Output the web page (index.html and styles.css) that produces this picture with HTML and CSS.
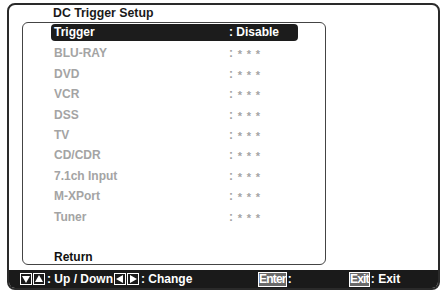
FILE: index.html
```html
<!DOCTYPE html>
<html>
<head>
<meta charset="utf-8">
<link rel="stylesheet" href="styles.css">
</head>
<body>
<div class="screen">
  <div class="title">DC Trigger Setup</div>
  <div class="panel">
    <div class="row active"><span class="label">Trigger</span><span class="value">: Disable</span></div>
    <div class="row dim"><span class="label">BLU-RAY</span><span class="value">: <i>*</i><i>*</i><i>*</i></span></div>
    <div class="row dim"><span class="label">DVD</span><span class="value">: <i>*</i><i>*</i><i>*</i></span></div>
    <div class="row dim"><span class="label">VCR</span><span class="value">: <i>*</i><i>*</i><i>*</i></span></div>
    <div class="row dim"><span class="label">DSS</span><span class="value">: <i>*</i><i>*</i><i>*</i></span></div>
    <div class="row dim"><span class="label">TV</span><span class="value">: <i>*</i><i>*</i><i>*</i></span></div>
    <div class="row dim"><span class="label">CD/CDR</span><span class="value">: <i>*</i><i>*</i><i>*</i></span></div>
    <div class="row dim"><span class="label">7.1ch Input</span><span class="value">: <i>*</i><i>*</i><i>*</i></span></div>
    <div class="row dim"><span class="label">M-XPort</span><span class="value">: <i>*</i><i>*</i><i>*</i></span></div>
    <div class="row dim"><span class="label">Tuner</span><span class="value">: <i>*</i><i>*</i><i>*</i></span></div>
    <div class="row spacer"></div>
    <div class="row"><span class="label">Return</span></div>
  </div>
  <div class="footer">
    <div class="group">
      <span class="key"><svg width="10" height="10" viewBox="0 0 10 10"><path d="M1 2 H9 L5 9 Z" fill="#fff"/></svg></span><span class="key"><svg width="10" height="10" viewBox="0 0 10 10"><path d="M1 8 H9 L5 1 Z" fill="#fff"/></svg></span><span class="txt">: Up / Down</span><span class="key"><svg width="10" height="10" viewBox="0 0 10 10"><path d="M8 1 V9 L1 5 Z" fill="#fff"/></svg></span><span class="key"><svg width="10" height="10" viewBox="0 0 10 10"><path d="M2 1 V9 L9 5 Z" fill="#fff"/></svg></span><span class="txt">: Change</span>
    </div>
    <div class="group"><span class="word">Enter</span><span class="txt">:</span></div>
    <div class="group"><span class="word">Exit</span><span class="txt">: Exit</span></div>
  </div>
</div>
</body>
</html>
```

FILE: styles.css
```css
html, body {
  margin: 0;
  padding: 0;
  background: #fff;
}
body {
  font-family: "Liberation Sans", Arial, sans-serif;
  font-weight: bold;
  color: #111;
}
.screen {
  margin: 3px 0 0 7px;
  width: 429px;
  height: 283px;
  border: 2px solid #2a2a2a;
  border-radius: 8px;
  display: flex;
  flex-direction: column;
  overflow: hidden;
}
.title {
  height: 17px;
  line-height: 17px;
  font-size: 12.3px;
  padding-left: 44px;
  color: #1a1a1a;
}
.panel {
  margin-left: 13px;
  width: 302px;
  height: 241px;
  border: 1px solid #444;
  border-radius: 6px;
  box-sizing: content-box;
}
.row {
  height: 20.4px;
  line-height: 20.4px;
  font-size: 12px;
  display: flex;
  align-items: center;
  padding-left: 31px;
}
.row.active {
  margin-left: 28px;
  padding-left: 3px;
  width: 244px;
  height: 17px;
  line-height: 17px;
  margin-top: 1px;
  margin-bottom: 2.4px;
  background: #1c1c1c;
  color: #fff;
  border-radius: 4px;
}
.row.dim {
  color: #a4a4a4;
}
.label {
  width: 175px;
  flex: none;
}
.value i {
  font-style: normal;
  font-size: 11px;
  display: inline-block;
  width: 9px;
  text-align: center;
  position: relative;
  top: 1px;
}
.value i:first-child {
  margin-left: -1px;
}
.footer {
  margin-top: auto;
  height: 18px;
  background: #1a1a1a;
  color: #fff;
  font-size: 12px;
  display: grid;
  grid-template-columns: 238px 91px auto;
  align-items: center;
  padding-left: 11px;
}
.group {
  display: flex;
  align-items: center;
  white-space: nowrap;
}
.key {
  display: inline-flex;
  align-items: center;
  justify-content: center;
  width: 12px;
  height: 12px;
  border: 1px solid #fff;
  box-sizing: border-box;
  margin-right: 1px;
}
.txt {
  margin-left: 1px;
  margin-right: 1px;
}
.word {
  display: inline-block;
  border: 1px solid #fff;
  background: #6a6a6a;
  padding: 0;
  line-height: 13px;
  font-size: 12px;
  letter-spacing: -0.8px;
}
```
